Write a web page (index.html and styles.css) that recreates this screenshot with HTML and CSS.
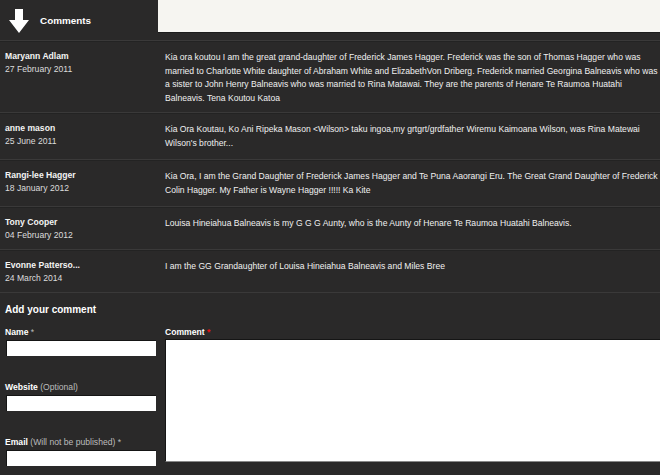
FILE: index.html
```html
<!DOCTYPE html>
<html lang="en">
<head>
  <meta charset="UTF-8">
  <title>Comments</title>
  <link rel="stylesheet" href="styles.css">
</head>
<body>
  <div class="header">
    <div class="header-title">
      <svg class="arrow" width="20" height="24" viewBox="0 0 20 24">
        <path d="M6 0 H14 V11 H20 L10 24 L0 11 H6 Z" fill="#fff"/>
      </svg>
      <span>Comments</span>
    </div>
    <div class="header-box"></div>
  </div>

  <div class="comment">
    <div class="who">
      <div class="name">Maryann Adlam</div>
      <div class="date">27 February 2011</div>
    </div>
    <div class="text">Kia ora koutou I am the great grand-daughter of Frederick James Hagger. Frederick was the son of Thomas Hagger who was married to Charlotte White daughter of Abraham White and ElizabethVon Driberg. Frederick married Georgina Balneavis who was a sister to John Henry Balneavis who was married to Rina Matawai. They are the parents of Henare Te Raumoa Huatahi Balneavis. Tena Koutou Katoa</div>
  </div>

  <div class="comment tall">
    <div class="who">
      <div class="name">anne mason</div>
      <div class="date">25 June 2011</div>
    </div>
    <div class="text">Kia Ora Koutau, Ko Ani Ripeka Mason &lt;Wilson&gt; taku ingoa,my grtgrt/grdfather Wiremu Kaimoana Wilson, was Rina Matewai Wilson's brother...</div>
  </div>

  <div class="comment tall">
    <div class="who">
      <div class="name">Rangi-lee Hagger</div>
      <div class="date">18 January 2012</div>
    </div>
    <div class="text">Kia Ora, I am the Grand Daughter of Frederick James Hagger and Te Puna Aaorangi Eru. The Great Grand Daughter of Frederick Colin Hagger. My Father is Wayne Hagger !!!!! Ka Kite</div>
  </div>

  <div class="comment">
    <div class="who">
      <div class="name">Tony Cooper</div>
      <div class="date">04 February 2012</div>
    </div>
    <div class="text">Louisa Hineiahua Balneavis is my G G G Aunty, who is the Aunty of Henare Te Raumoa Huatahi Balneavis.</div>
  </div>

  <div class="comment">
    <div class="who">
      <div class="name">Evonne Patterso...</div>
      <div class="date">24 March 2014</div>
    </div>
    <div class="text">I am the GG Grandaughter of Louisa Hineiahua Balneavis and Miles Bree</div>
  </div>

  <div class="add">
    <h2>Add your comment</h2>
    <div class="form">
      <div class="fields">
        <label>Name <span class="note">*</span></label>
        <input type="text">
        <label>Website <span class="note">(Optional)</span></label>
        <input type="text">
        <label>Email <span class="note">(Will not be published) *</span></label>
        <input type="text">
      </div>
      <div class="message">
        <label>Comment <span class="req">*</span></label>
        <textarea></textarea>
      </div>
    </div>
  </div>
</body>
</html>
```

FILE: styles.css
```css
body {
  margin: 0;
  background-color: #2a2929;
  color: #e6e6e6;
  font-family: "Liberation Sans", Arial, sans-serif;
  font-size: 8.6px;
  overflow: hidden;
}
.header {
  display: flex;
  height: 40px;
  border-bottom: 1px solid #3a3939;
}
.header-title {
  width: 158px;
  display: flex;
  align-items: center;
  gap: 11px;
  padding-left: 9px;
  box-sizing: border-box;
  font-size: 9.9px;
  font-weight: bold;
  color: #fff;
}
.arrow {
  margin-top: 2px;
}
.header-box {
  flex: 1;
  height: 32px;
  background-color: #f6f5f1;
  border-bottom: 1px solid #1c1c1c;
}
.comment {
  display: grid;
  grid-template-columns: 158px 1fr;
  padding: 9px 0 7px;
  border-bottom: 1px solid #3a3939;
  box-shadow: 0 1px 0 #232323 inset;
}
.comment.tall {
  padding-bottom: 9px;
}
.who {
  padding-left: 5px;
  line-height: 13px;
}
.name {
  font-weight: bold;
  color: #f4f4f4;
}
.date {
  color: #dcdcdc;
}
.text {
  padding: 1px 0 0 7px;
  line-height: 13.5px;
  color: #f0f0f0;
}
.add {
  padding-top: 11px;
}
.add h2 {
  margin: 0 0 11px 5px;
  font-size: 10px;
  color: #fff;
}
.form {
  display: grid;
  grid-template-columns: 158px 1fr;
}
.fields {
  display: flex;
  flex-direction: column;
  padding-left: 5px;
}
.fields label,
.message label {
  font-weight: bold;
  color: #fff;
  line-height: 12px;
}
.note {
  font-weight: normal;
  color: #bcbcbc;
}
.req {
  color: #e01010;
}
.fields input {
  width: 150px;
  height: 16px;
  box-sizing: border-box;
  margin: 2px 0 25px 1px;
  border: none;
  border-top: 1px solid #151515;
  border-left: 1px solid #151515;
  background-color: #fff;
  padding: 0;
}
.fields input:last-child {
  margin-bottom: 0;
}
.message {
  display: flex;
  flex-direction: column;
  padding-left: 7px;
}
.message textarea {
  width: 500px;
  height: 123px;
  box-sizing: border-box;
  margin-top: 1px;
  border: none;
  border-top: 1px solid #151515;
  border-left: 1px solid #151515;
  border-bottom: 1px solid #888;
  background-color: #fff;
  padding: 0;
  resize: none;
}
```
